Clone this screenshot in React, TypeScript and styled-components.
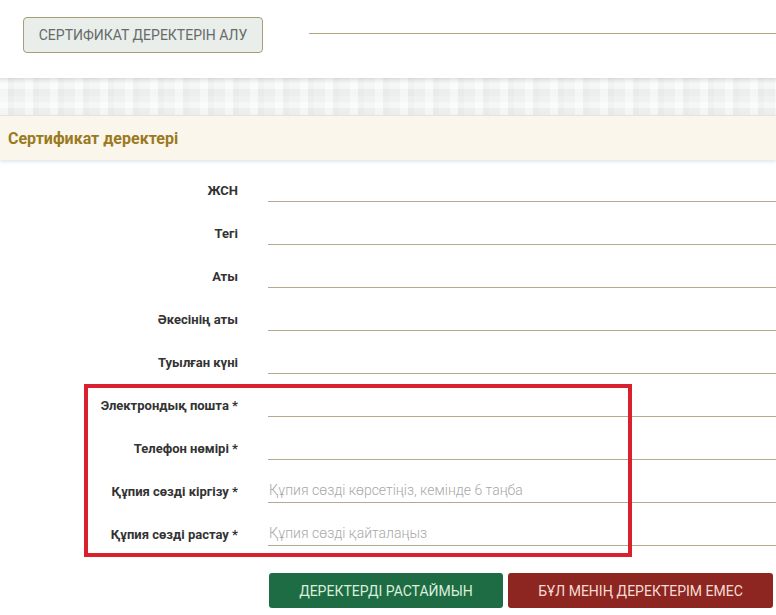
import React from "react";
import styled, { createGlobalStyle } from "styled-components";

const Global = createGlobalStyle`
  html, body { margin: 0; padding: 0; background: #fff; }
  body { font-family: Roboto, "Noto Sans", "Liberation Sans", sans-serif; color: #333; }
  * { box-sizing: border-box; }
`;

const Page = styled.div`
  width: 776px;
  overflow: hidden;
`;

const TopBar = styled.div`
  height: 78px;
  display: flex;
  align-items: flex-start;
  padding: 17px 0 0 23px;
  gap: 46px;
  background: #fff;
`;

const GhostButton = styled.button`
  height: 36px;
  width: 240px;
  flex: none;
  background: #e9eeeb;
  border: 1px solid #a59e76;
  border-radius: 4px;
  color: #666a68;
  font-family: Roboto, "Liberation Sans", sans-serif;
  font-size: 14px;
  text-transform: uppercase;
  padding: 0;
`;

const Rule = styled.div`
  flex: 1;
  height: 1px;
  margin-top: 16px;
  background: #b1a882;
`;

const Pattern = styled.div`
  height: 38px;
  background-color: #eff2f1;
  background-image:
    linear-gradient(180deg, rgba(0,0,0,0.09) 0px, rgba(0,0,0,0) 4px),
    repeating-linear-gradient(90deg, rgba(255,255,255,0.45) 0 8px, rgba(0,0,0,0.015) 8px 14px, rgba(255,255,255,0) 14px 25px),
    repeating-linear-gradient(0deg, rgba(0,0,0,0.015) 0 7px, rgba(255,255,255,0.4) 7px 13px, rgba(255,255,255,0) 13px 19px);
  border-bottom: 1px solid #e2e5e3;
`;

const SectionHead = styled.div`
  height: 44px;
  display: flex;
  align-items: center;
  padding-left: 8px;
  background: #faf6ec;
  color: #9a7a20;
  font-weight: 700;
  font-size: 16px;
  box-shadow: 0 2px 3px rgba(170, 185, 200, 0.35);
  position: relative;
`;

const Form = styled.div`
  display: flex;
  flex-direction: column;
`;

const Group = styled.div`
  position: relative;
  display: flex;
  flex-direction: column;
`;

const Highlight = styled.div`
  position: absolute;
  left: 84px;
  top: 9px;
  width: 548px;
  bottom: -10px;
  border: 4px solid #d9202f;
  pointer-events: none;
`;

const Row = styled.div`
  height: 43px;
  display: grid;
  grid-template-columns: 238px 1fr;
  column-gap: 30px;
  align-items: end;
  padding-bottom: 1px;
`;

const Label = styled.label`
  text-align: right;
  font-size: 13px;
  font-weight: 700;
  color: #333;
  line-height: 30px;
  height: 26px;
  white-space: nowrap;
`;

const Field = styled.input`
  height: 26px;
  width: 100%;
  border: none;
  border-bottom: 1px solid #b3ab8c;
  background: transparent;
  padding: 0 1px;
  font-family: Roboto, "Liberation Sans", sans-serif;
  font-size: 14px;
  color: #333;
  outline: none;
  &::placeholder { color: #a8a8a8; font-weight: 300; }
`;

const Actions = styled.div`
  display: flex;
  gap: 5px;
  padding: 26px 0 0 269px;
`;

const ActionButton = styled.button<{ $tone: "ok" | "no"; $w: number }>`
  height: 35px;
  width: ${(p) => p.$w}px;
  border: none;
  border-radius: 3px;
  background: ${(p) => (p.$tone === "ok" ? "#1d6c44" : "#8d2621")};
  color: ${(p) => (p.$tone === "ok" ? "#dcefdc" : "#f6dcd6")};
  font-family: Roboto, "Liberation Sans", sans-serif;
  font-size: 14px;
  text-transform: uppercase;
  padding: 0;
`;

const plain = ["ЖСН", "Тегі", "Аты", "Әкесінің аты", "Туылған күні"];
const marked: { label: string; ph?: string }[] = [
  { label: "Электрондық пошта *" },
  { label: "Телефон нөмірі *" },
  { label: "Құпия сөзді кіргізу *", ph: "Құпия сөзді көрсетіңіз, кемінде 6 таңба" },
  { label: "Құпия сөзді растау *", ph: "Құпия сөзді қайталаңыз" },
];

export default function App() {
  return (
    <Page>
      <Global />
      <TopBar>
        <GhostButton>Сертификат деректерін алу</GhostButton>
        <Rule />
      </TopBar>
      <Pattern />
      <SectionHead>Сертификат деректері</SectionHead>
      <Form>
        {plain.map((l) => (
          <Row key={l}>
            <Label>{l}</Label>
            <Field readOnly />
          </Row>
        ))}
        <Group>
          {marked.map((m) => (
            <Row key={m.label}>
              <Label>{m.label}</Label>
              <Field placeholder={m.ph} />
            </Row>
          ))}
          <Highlight />
        </Group>
      </Form>
      <Actions>
        <ActionButton $tone="ok" $w={234}>Деректерді растаймын</ActionButton>
        <ActionButton $tone="no" $w={265}>Бұл менің деректерім емес</ActionButton>
      </Actions>
    </Page>
  );
}
